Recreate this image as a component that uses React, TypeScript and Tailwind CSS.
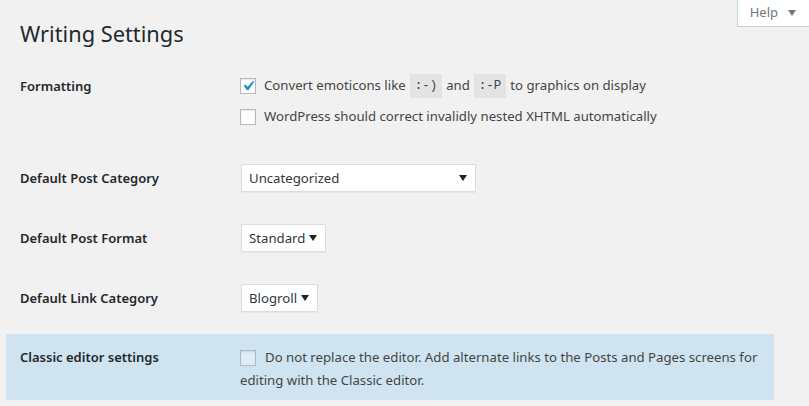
import React from "react";

const Caret = ({ className = "" }: { className?: string }) => (
  <svg width="8" height="6" viewBox="0 0 8 6" className={className}>
    <path d="M0 0 H8 L4 6 Z" fill="currentColor" />
  </svg>
);

const Checkbox = ({ checked = false, tint = false }: { checked?: boolean; tint?: boolean }) => (
  <span
    className={`inline-flex items-center justify-center w-4 h-4 border border-[#b4b9be] shrink-0 align-middle overflow-visible ${
      tint ? "bg-[#dbeef9]" : "bg-white"
    } shadow-[inset_0_1px_2px_rgba(0,0,0,0.1)]`}
  >
    {checked && (
      <svg width="20" height="20" viewBox="0 0 20 20" className="-m-[3px] shrink-0">
        <path d="M14.83 4.89l1.34.94-5.81 8.38H9.02L5.78 9.67l1.34-1.25 2.57 2.4z" fill="#1e8cbe" />
      </svg>
    )}
  </span>
);

const Select = ({ label, width }: { label: string; width: string }) => (
  <div
    className={`${width} h-[28px] bg-white border border-[#ddd] shadow-[0_1px_1px_rgba(0,0,0,0.04)] flex items-center justify-between pl-[7px] pr-[8px] text-[13.2px] text-[#32373c]`}
  >
    <span className="translate-y-[1px]">{label}</span>
    <Caret className="text-[#222]" />
  </div>
);

const Code = ({ children }: { children: React.ReactNode }) => (
  <code className="bg-[#e3e3e3] px-[5px] py-[3px] mx-[4px] text-[12.5px] text-[#444] font-['Liberation_Mono',monospace]">
    {children}
  </code>
);

export default function App() {
  return (
    <div className="min-h-[406px] bg-[#f1f1f1] font-['Noto_Sans',sans-serif] text-[#444] relative">
      <div className="absolute right-0 top-0 w-[72px] h-[27px] bg-white border-l border-b border-[#ccd0d4] flex items-center justify-end gap-[10px] pr-[13px] text-[13px] text-[#72777c]">
        <span>Help</span>
        <Caret className="text-[#72777c]" />
      </div>
      <div className="pl-[6px] pr-[35px]">
        <h1 className="pl-[14px] pt-[19px] h-[60px] text-[21.8px] leading-[29px] text-[#23282d] font-normal">
          Writing Settings
        </h1>

        <div className="flex pl-[14px] pt-[14px] pb-[20px]">
          <div className="w-[220px] h-[24px] flex items-center text-[13px] font-semibold text-[#23282d]">
            <span className="translate-y-[1px]">Formatting</span>
          </div>
          <div className="flex flex-col gap-[7px] text-[13.2px]">
            <div className="h-[24px] flex items-center">
              <Checkbox checked />
              <span className="ml-[8px]">Convert emoticons like</span>
              <Code>:-)</Code>
              <span>and</span>
              <Code>:-P</Code>
              <span>to graphics on display</span>
            </div>
            <div className="h-[24px] flex items-center">
              <Checkbox />
              <span className="ml-[8px]">WordPress should correct invalidly nested XHTML automatically</span>
            </div>
          </div>
        </div>

        {[
          { label: "Default Post Category", value: "Uncategorized", w: "w-[235px]" },
          { label: "Default Post Format", value: "Standard", w: "w-[85px]" },
          { label: "Default Link Category", value: "Blogroll", w: "w-[77px]" },
        ].map((r) => (
          <div key={r.label} className="flex pl-[14px] pt-[15px] pb-[17px]">
            <div className="w-[221px] h-[28px] flex items-center text-[13px] font-semibold text-[#23282d]">
              <span className="translate-y-[1px]">{r.label}</span>
            </div>
            <Select label={r.value} width={r.w} />
          </div>
        ))}

        <div className="mt-[5px] bg-[#cfe4f0] flex pl-[14px] pt-[12px] pb-[8px] h-[66px]">
          <div className="w-[220px] h-[23px] flex items-center text-[13px] font-semibold text-[#23282d]">
            Classic editor settings
          </div>
          <div className="flex-1 text-[13.2px] leading-[23px] pr-[10px]">
            <Checkbox tint />
            <span className="ml-[9px]">
              Do not replace the editor. Add alternate links to the Posts and Pages screens for editing with the
              Classic editor.
            </span>
          </div>
        </div>
      </div>
    </div>
  );
}
